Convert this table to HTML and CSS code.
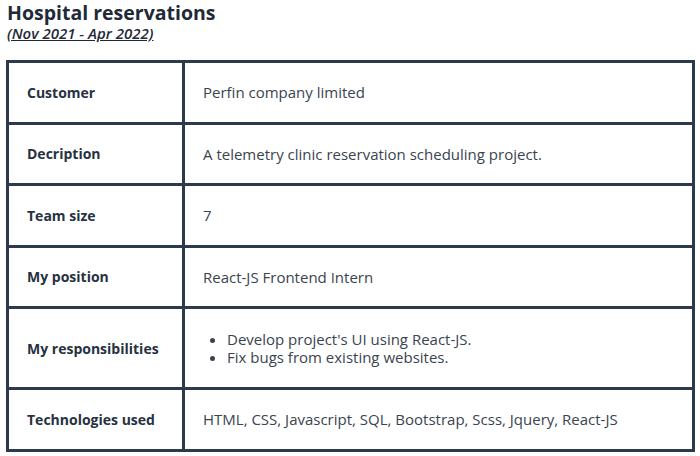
FILE: index.html
```html
<!DOCTYPE html>
<html lang="en">
<head>
<meta charset="utf-8">
<title>Hospital reservations</title>
<link rel="stylesheet" href="styles.css">
</head>
<body>
<section class="project">
  <h2 class="project-title">Hospital reservations</h2>
  <p class="project-period">(Nov 2021 - Apr 2022)</p>
  <table class="project-table">
    <tbody>
      <tr class="row">
        <th class="label">Customer</th>
        <td class="value">Perfin company limited</td>
      </tr>
      <tr class="row">
        <th class="label">Decription</th>
        <td class="value">A telemetry clinic reservation scheduling project.</td>
      </tr>
      <tr class="row">
        <th class="label">Team size</th>
        <td class="value">7</td>
      </tr>
      <tr class="row">
        <th class="label">My position</th>
        <td class="value">React-JS Frontend Intern</td>
      </tr>
      <tr class="row row-tall">
        <th class="label">My responsibilities</th>
        <td class="value">
          <ul class="duties">
            <li>Develop project's UI using React-JS.</li>
            <li>Fix bugs from existing websites.</li>
          </ul>
        </td>
      </tr>
      <tr class="row">
        <th class="label">Technologies used</th>
        <td class="value">HTML, CSS, Javascript, SQL, Bootstrap, Scss, Jquery, React-JS</td>
      </tr>
    </tbody>
  </table>
</section>
</body>
</html>
```

FILE: styles.css
```css
html, body {
  margin: 0;
  padding: 0;
  background: #ffffff;
}

body {
  font-family: "Open Sans", "DejaVu Sans", sans-serif;
  color: #2c3a4b;
}

.project {
  padding: 0 5px 0 6px;
}

.project-title {
  margin: 0;
  padding: 0 0 0 1px;
  font-size: 19.5px;
  line-height: 25px;
  font-weight: 700;
  color: #1f2a38;
}

.project-period {
  margin: 0;
  padding-left: 1px;
  font-size: 15px;
  line-height: 17px;
  font-style: italic;
  font-weight: 600;
  text-decoration: underline;
  color: #1f2a38;
}

.project-table {
  margin-top: 18px;
  width: 689px;
  border-collapse: collapse;
  border: 3px solid #2d3a4b;
}

.label,
.value {
  border: 3px solid #2d3a4b;
  height: 58.5px;
  padding: 0 18px;
  vertical-align: middle;
  text-align: left;
}

.label {
  width: 137px;
  font-size: 14px;
  font-weight: 700;
  color: #26323f;
}

.value {
  font-size: 15px;
  font-weight: 400;
  color: #3a4450;
}

.row-tall .label,
.row-tall .value {
  height: 78px;
}

.duties {
  margin: 0;
  padding-left: 24px;
  line-height: 18px;
}
```
